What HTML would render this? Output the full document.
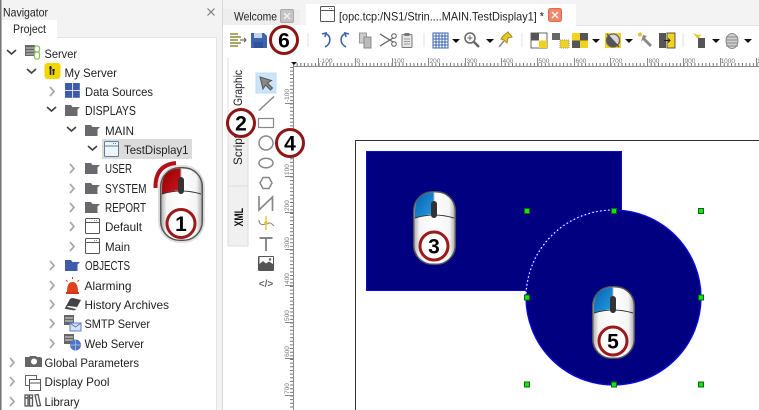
<!DOCTYPE html>
<html><head><meta charset="utf-8"><style>
html,body{margin:0;padding:0;background:#fff;width:759px;height:410px;overflow:hidden}
svg{display:block;position:absolute;left:0;top:0}
text{font-family:"Liberation Sans",sans-serif;font-size:12px;fill:#222}
.k{font-weight:bold;fill:#000;text-anchor:middle;font-size:21px}
.r{font-size:6.500px;fill:#777}
</style></head><body>
<svg width="759" height="410" viewBox="0 0 759 410" xmlns="http://www.w3.org/2000/svg">
<defs>
<linearGradient id="body" x1="0" x2="1" y1="0" y2="0"><stop offset="0" stop-color="#a8a8a8"/><stop offset=".14" stop-color="#f4f4f4"/><stop offset=".5" stop-color="#fff"/><stop offset=".86" stop-color="#f4f4f4"/><stop offset="1" stop-color="#a8a8a8"/></linearGradient>
<linearGradient id="blue" x1="0" x2="1" y1="0" y2="1"><stop offset="0" stop-color="#0a5fae"/><stop offset="1" stop-color="#22a0e4"/></linearGradient>
<linearGradient id="red" x1="0" x2="1" y1="0" y2="1"><stop offset="0" stop-color="#8e0000"/><stop offset="1" stop-color="#d4141c"/></linearGradient>
<path id="fld" d="M0 1h6l1.500 2H15l-2.500 2.500V12H0z"/>
<path id="chR" d="M0 0l4 4.500-4 4.500" fill="none" stroke="#a8a8a8" stroke-width="1.700"/>
<path id="chD" d="M0 0l4.500 4 4.500-4" fill="none" stroke="#444" stroke-width="1.700"/>
<g id="win"><rect x=".5" y=".5" width="14" height="15" rx="1" fill="#fff" stroke="#555"/><path d="M1 4.500h13" stroke="#555"/><path d="M9 2.500h4" stroke="#888" stroke-dasharray="1 1"/></g>
<path id="dn" d="M0 0h8l-4 4z" fill="#111"/>
</defs>

<rect width="759" height="410" fill="#f3f3f3"/>
<rect x="0" y="0" width="1.500" height="410" fill="#777"/>
<rect x="2" y="37" width="214" height="373" fill="#fff"/>
<rect x="2" y="20" width="55" height="18" fill="#fff"/>
<path d="M57 37.500H216M216.500 37V410" stroke="#e4e4e4" fill="none"/>
<rect x="222" y="25" width="537" height="385" fill="#fff"/>
<rect x="222" y="0" width="1" height="410" fill="#d8d8d8"/>

<text x="3" y="16.500" textLength="45" lengthAdjust="spacingAndGlyphs">Navigator</text>
<path d="M207.500 8.500l7 7m0-7l-7 7" stroke="#777" stroke-width="1.100"/>
<text x="13" y="33" textLength="33" lengthAdjust="spacingAndGlyphs">Project</text>

<use href="#chD" x="7" y="50"/><use href="#chD" x="27" y="69"/><use href="#chR" x="50" y="87"/>
<use href="#chD" x="47" y="107"/><use href="#chD" x="67" y="127"/><use href="#chD" x="88" y="146"/>
<use href="#chR" x="70" y="164"/><use href="#chR" x="70" y="184"/><use href="#chR" x="70" y="203"/><use href="#chR" x="70" y="222"/><use href="#chR" x="70" y="242"/>
<use href="#chR" x="50" y="261"/><use href="#chR" x="50" y="281"/><use href="#chR" x="50" y="300"/><use href="#chR" x="50" y="319"/><use href="#chR" x="50" y="339"/>
<use href="#chR" x="10" y="358"/><use href="#chR" x="10" y="377"/><use href="#chR" x="10" y="397"/>

<rect x="102" y="139" width="90" height="20" fill="#dcdcdc"/>

<text x="44.500" y="58" textLength="32.500" lengthAdjust="spacingAndGlyphs">Server</text>
<text x="64.500" y="77" textLength="52.500" lengthAdjust="spacingAndGlyphs">My Server</text>
<text x="85" y="96" textLength="68" lengthAdjust="spacingAndGlyphs">Data Sources</text>
<text x="85" y="115" textLength="51" lengthAdjust="spacingAndGlyphs" style="font-size:12.500px">DISPLAYS</text>
<text x="105" y="135" textLength="29" lengthAdjust="spacingAndGlyphs">MAIN</text>
<text x="124" y="154" textLength="64.500" lengthAdjust="spacingAndGlyphs">TestDisplay1</text>
<text x="105" y="173" textLength="27" lengthAdjust="spacingAndGlyphs" style="font-size:12.500px">USER</text>
<text x="105" y="193" textLength="41.500" lengthAdjust="spacingAndGlyphs" style="font-size:12.500px">SYSTEM</text>
<text x="105" y="212" textLength="41" lengthAdjust="spacingAndGlyphs" style="font-size:12.500px">REPORT</text>
<text x="105" y="231" textLength="37" lengthAdjust="spacingAndGlyphs">Default</text>
<text x="105" y="251" textLength="25" lengthAdjust="spacingAndGlyphs">Main</text>
<text x="85" y="270" textLength="45" lengthAdjust="spacingAndGlyphs" style="font-size:12.500px">OBJECTS</text>
<text x="84.500" y="290" textLength="47" lengthAdjust="spacingAndGlyphs">Alarming</text>
<text x="84.500" y="309" textLength="84.500" lengthAdjust="spacingAndGlyphs">History Archives</text>
<text x="84.500" y="328" textLength="65.500" lengthAdjust="spacingAndGlyphs">SMTP Server</text>
<text x="84.500" y="348" textLength="59.500" lengthAdjust="spacingAndGlyphs">Web Server</text>
<text x="44.500" y="367" textLength="94.500" lengthAdjust="spacingAndGlyphs">Global Parameters</text>
<text x="44.500" y="386" textLength="65" lengthAdjust="spacingAndGlyphs">Display Pool</text>
<text x="44.500" y="406" textLength="35" lengthAdjust="spacingAndGlyphs">Library</text>

<g>
<rect x="25" y="45" width="10" height="11" fill="#666"/><path d="M26 48h8M26 51h8M26 54h8" stroke="#ccc"/>
<rect x="34.500" y="46" width="5" height="6" rx="2" fill="none" stroke="#8cc265" stroke-width="1.300"/><rect x="34.500" y="52" width="5" height="7" rx="2" fill="none" stroke="#8cc265" stroke-width="1.300"/>
<rect x="44.500" y="63" width="16" height="16" rx="3" fill="#f2d600"/><path d="M50.500 66v9M53.500 69v6" stroke="#222" stroke-width="1.600"/><path d="M49 68h3M52 70h3" stroke="#222"/>
<g fill="#3d5ca8"><rect x="65" y="83" width="7" height="7"/><rect x="72.800" y="83" width="7" height="7"/><rect x="65" y="90.800" width="7" height="7"/><rect x="72.800" y="90.800" width="7" height="7"/></g>
<g fill="#6a686c"><use href="#fld" x="65" y="104"/><use href="#fld" x="85" y="124"/><use href="#fld" x="85" y="162"/><use href="#fld" x="85" y="182"/><use href="#fld" x="85" y="201"/></g>
<use href="#fld" x="65" y="259" fill="#3f5cab"/>
<g><rect x="104.500" y="141.500" width="14" height="15" rx="1" fill="#eef5fb" stroke="#5f7d9c"/><path d="M105 146h13" stroke="#5f7d9c"/><path d="M113 143.500h4" stroke="#5f7d9c" stroke-dasharray="1 1"/></g>
<use href="#win" x="85" y="218"/><use href="#win" x="85" y="238"/>
<path d="M67 292c0-5 1-10 5.500-10S78 287 78 292z" fill="#e2401c"/><rect x="66" y="292" width="13" height="2" fill="#c9381a"/><path d="M72.500 277v2M66 280l1.500 1.500M79 280l-1.500 1.500" stroke="#e2401c"/>
<path d="M65 308l5-9q1-1 3-1l8 2-5 9q-1 2-4 1l-6-1q-2-.5-1-1z" fill="#444"/><path d="M67 307l9 2 1-2-9-1z" fill="#fff"/>
<rect x="64" y="315" width="10" height="10" fill="#666"/><path d="M65 318h8M65 321h8" stroke="#ddd"/><rect x="70" y="323" width="11" height="8" fill="#d5e1f3" stroke="#5c7fc0"/><path d="M70 323l5.500 4 5.500-4" fill="none" stroke="#5c7fc0"/>
<rect x="64" y="334" width="10" height="10" fill="#666"/><path d="M65 337h8M65 340h8" stroke="#ddd"/><circle cx="75.500" cy="345" r="5.500" fill="#4f74c6"/><path d="M70 345h11M75.500 339.500v11" stroke="#b8c9ec" stroke-width=".7"/>
<path d="M25 357h4l1-1h6l1 1h3l2 1v9H25z" fill="#666"/><circle cx="34" cy="361.500" r="3" fill="#fff"/>
<rect x="25.500" y="375.500" width="11" height="10" fill="#fff" stroke="#666"/><rect x="29.500" y="379.500" width="11" height="11" fill="#fff" stroke="#555"/><path d="M30 383h10" stroke="#555"/>
<path d="M25 395h3v11h-3zM29.500 395h3v11h-3zM35 395l3-.5 2.500 11-3 .5z" fill="none" stroke="#555" stroke-width="1.300"/><path d="M25 398h3M29.500 398h3" stroke="#555" stroke-width="1.500"/>
</g>

<rect x="223" y="9" width="77" height="16" fill="#eeeeee"/>
<text x="234" y="20.500" textLength="43" lengthAdjust="spacingAndGlyphs">Welcome</text>
<rect x="280.500" y="9.500" width="13" height="13" rx="1.500" fill="#c4c4c4" stroke="#aaa"/><path d="M284 13l6 6m0-6l-6 6" stroke="#f4f4f4" stroke-width="1.300"/>
<rect x="306" y="4" width="270" height="22" fill="#fff"/>
<use href="#win" x="320" y="6" />
<text x="339" y="20.500" textLength="205" lengthAdjust="spacingAndGlyphs">[opc.tcp:/NS1/Strin....MAIN.TestDisplay1] *</text>
<rect x="548.500" y="8.500" width="13" height="13" rx="2" fill="#f0876b" stroke="#dc6a52"/><path d="M552 12l6 6m0-6l-6 6" stroke="#fff" stroke-width="1.300"/>
<rect x="576" y="25" width="183" height="1" fill="#e2e2e2"/>

<g>
<path d="M230 34h8M230 37h11M230 40h8M230 43h11M230 46h8" stroke="#8c8c3a" stroke-width="1.500"/><path d="M240 40h6m-2-2l2 2-2 2" fill="none" stroke="#555"/>
<path d="M251 33h13l3 3v12h-16z" fill="#3e63ad"/><rect x="254" y="33" width="8" height="5" fill="#c5d2ea"/><rect x="254" y="42" width="9" height="6" fill="#2f5299"/>
<path d="M308 33v14M424 33v14M522 33v14M683 33v14" stroke="#e2e2e2"/>
<path d="M322 34l4-1-1 4M325 33.500c6 1 7 10 0 13.500" fill="none" stroke="#3e63ad" stroke-width="1.600"/>
<path d="M349 34l-4-1 1 4M346 33.500c-6 1-7 10 0 13.500" fill="none" stroke="#3e63ad" stroke-width="1.600"/>
<rect x="359.500" y="33" width="7" height="10" fill="#ccc" stroke="#999"/><rect x="364" y="37" width="7" height="11" fill="#bbb" stroke="#888"/>
<path d="M380 34l13 8M380 46l13-8" stroke="#666" stroke-width="1.300" fill="none"/><circle cx="394" cy="36" r="2.300" fill="#fff" stroke="#555"/><circle cx="394" cy="44" r="2.300" fill="#fff" stroke="#555"/>
<rect x="402" y="34.500" width="10" height="13" rx="1" fill="#e6e6e6" stroke="#777"/><rect x="404.500" y="33" width="5" height="3" fill="#777"/><path d="M404 39h6M404 41.500h6M404 44h6" stroke="#999"/>
<rect x="433" y="33" width="15" height="15" fill="#fff" stroke="#3e63ad"/><path d="M436 33v15M439 33v15M442 33v15M445 33v15M433 36h15M433 39h15M433 42h15M433 45h15" stroke="#3e63ad"/>
<use href="#dn" x="452" y="39"/>
<circle cx="470" cy="38" r="5" fill="#fff" stroke="#666" stroke-width="1.500"/><path d="M467.500 38h5M470 35.500v5" stroke="#666"/><path d="M474 42l5 5" stroke="#666" stroke-width="2.500"/>
<use href="#dn" x="486" y="39"/>
<path d="M499 47l5-6" stroke="#888" stroke-width="1.500"/><path d="M503 36l5-4 4 5-4 1-1 5-3-3-3-1z" fill="#e6c52c" stroke="#a98d1a"/>
<rect x="531" y="33" width="16" height="15" fill="#fff" stroke="#666"/><rect x="531" y="33" width="8" height="7.500" fill="#555"/><rect x="539" y="40.500" width="8" height="7.500" fill="#f2d21e"/>
<rect x="552" y="33" width="8" height="7" fill="#666"/><rect x="560" y="40" width="9" height="8" fill="#f2d21e"/><path d="M560 40h9v8h-9z" fill="none" stroke="#999" stroke-dasharray="1 1"/>
<rect x="572" y="33" width="16" height="15" fill="#f2d21e"/><rect x="580" y="33" width="8" height="7.500" fill="#555"/><rect x="572" y="40.500" width="8" height="7.500" fill="#555"/>
<use href="#dn" x="592" y="39"/>
<rect x="605" y="33" width="16" height="15" fill="#f2d21e"/><circle cx="613" cy="40.500" r="6.500" fill="#d8d8d8" stroke="#666" stroke-width="1.300"/><path d="M607 34l12 13" stroke="#555" stroke-width="1.300"/><path d="M608.500 36l8.800 9.500a6.500 6.500 0 0 1-8.800-9.500z" fill="#555"/>
<use href="#dn" x="625" y="39"/>
<circle cx="640" cy="34.500" r="2" fill="#e6c52c"/><path d="M643 35l4 1-2 2 7 7-2 2-7-7-2 2z" fill="#888"/>
<rect x="659" y="33" width="7" height="15" fill="#555"/><rect x="667" y="33" width="8" height="15" fill="#f2d21e" stroke="#555"/><path d="M664 40.500h6m-2-2l2 2-2 2" fill="none" stroke="#222"/>
<path d="M693 33l5 2 4-1-3 3 1 1h-3z" fill="#e6c52c"/><rect x="698" y="38" width="7" height="10" fill="#555"/>
<use href="#dn" x="712" y="39"/>
<ellipse cx="732" cy="41" rx="6" ry="7.500" fill="#d0d0d0" stroke="#888"/><path d="M726 37h12M726 40h12M726 43h12M726 46h12" stroke="#888"/>
<use href="#dn" x="744" y="39"/>
</g>

<path d="M228 58h20v188h-20z" fill="#f0f0f0"/>
<rect x="228" y="58" width="20" height="66" fill="#fff"/>
<path d="M228 58v188M228 186h20M228 246h20M248 124v122" stroke="#dedede" fill="none"/>
<text transform="translate(242,106) rotate(-90)" textLength="36" lengthAdjust="spacingAndGlyphs">Graphic</text>
<text transform="translate(242,165) rotate(-90)" textLength="30" lengthAdjust="spacingAndGlyphs">Script</text>
<text transform="translate(243,226.500) rotate(-90)" textLength="18.500" lengthAdjust="spacingAndGlyphs" style="font-weight:bold;fill:#111">XML</text>

<rect x="256" y="73" width="20" height="20" fill="#cce4f7" stroke="#bcdcf5"/>
<path d="M260 77l3 12 2.500-4 5 5 2-2-5-5 4-2.500z" fill="#888" stroke="#555"/>
<path d="M259 110.500l15-14" stroke="#888" stroke-width="1.500"/>
<rect x="258.500" y="118.500" width="15" height="9" fill="#fff" stroke="#888" stroke-width="1.200"/>
<circle cx="266" cy="143" r="7" fill="#fff" stroke="#888" stroke-width="1.500"/>
<ellipse cx="266" cy="163" rx="7" ry="4.800" fill="#fff" stroke="#888" stroke-width="1.500"/>
<path d="M260 183l3-5.500h6l3 5.500-3 5.500h-6z" fill="#fff" stroke="#888" stroke-width="1.500"/>
<path d="M259 196v14L272.500 197v14" fill="none" stroke="#888" stroke-width="1.700"/>
<path d="M259 220q0 5 4.500 4.500t5.500-1.500 5 3" fill="none" stroke="#888" stroke-width="1.100"/><path d="M266 216v14" stroke="#e0c030" stroke-width="1.300"/><circle cx="266" cy="223" r="1.800" fill="#e0c030"/>
<path d="M259.500 238h13M266 238v13" stroke="#777" stroke-width="1.700"/>
<rect x="258" y="256" width="16" height="15" rx="1" fill="#555"/><path d="M259.500 264l3.500-3 3 2.500 3-2 4 2.500v-7h-13.500z" fill="#fff"/><circle cx="270" cy="259.500" r="1.200" fill="#555"/>
<text x="266" y="287" text-anchor="middle" style="font-size:10px;font-weight:bold;fill:#666">&lt;/&gt;</text>

<path d="M293.500 66V410M293 66.500H759" stroke="#8a8a8a" fill="none"/>
<path d="M291.500 67V410" stroke="#777" stroke-dasharray="1 2.650" stroke-width="3"/>
<path d="M293 64.500H759" stroke="#777" stroke-width="3" stroke-dasharray="1 2.650"/>
<path d="M291 62h6l-3 3z" fill="#111"/>
<path d="M318.500 58v8M355.500 58v8M392.500 58v8M428.500 58v8M465.500 58v8M501.500 58v8M537.500 58v8M574.500 58v8M610.500 58v8M647.500 58v8M683.500 58v8M720.500 58v8M756.500 58v8" stroke="#888"/>
<g>
<text class="r" x="319.500" y="63">-100</text><text class="r" x="356.500" y="63">0</text><text class="r" x="393.500" y="63">100</text><text class="r" x="429.500" y="63">200</text><text class="r" x="466.500" y="63">300</text><text class="r" x="502.500" y="63">400</text><text class="r" x="538.500" y="63">500</text><text class="r" x="575.500" y="63">600</text><text class="r" x="611.500" y="63">700</text><text class="r" x="648.500" y="63">800</text><text class="r" x="684.500" y="63">900</text><text class="r" x="720.500" y="63">1000</text><text class="r" x="757" y="63">11</text>
</g>
<path d="M285 103.500h8M285 140.500h8M285 176.500h8M285 212.500h8M285 249.500h8M285 285.500h8M285 322.500h8M285 358.500h8M285 395.500h8" stroke="#888"/>
<text class="r" transform="translate(289,102) rotate(-90)">-100</text>
<text class="r" transform="translate(289,139) rotate(-90)">0</text>
<text class="r" transform="translate(289,175) rotate(-90)">100</text>
<text class="r" transform="translate(289,211) rotate(-90)">200</text>
<text class="r" transform="translate(289,248) rotate(-90)">300</text>
<text class="r" transform="translate(289,284) rotate(-90)">400</text>
<text class="r" transform="translate(289,321) rotate(-90)">500</text>
<text class="r" transform="translate(289,357) rotate(-90)">600</text>
<text class="r" transform="translate(289,394) rotate(-90)">700</text>

<path d="M355.500 410V140.500H759" fill="none" stroke="#333"/>
<rect x="366.500" y="151.500" width="255" height="139" fill="#000080" stroke="#0a0ad8"/>
<circle cx="613.500" cy="297.500" r="87.500" fill="#000080" stroke="#0a0ae0" stroke-width="1.300"/>
<path d="M526 297.500A87.500 87.500 0 0 1 613.500 210" fill="none" stroke="#fff" stroke-width="1.200" stroke-dasharray="1.500 2.500"/>
<g fill="#00ee00" stroke="#1c5c1c">
<rect x="524.500" y="208.500" width="5" height="5"/><rect x="611.500" y="208.500" width="5" height="5"/><rect x="698.500" y="208.500" width="5" height="5"/>
<rect x="524.500" y="295" width="5" height="5"/><rect x="698.500" y="295" width="5" height="5"/>
<rect x="524.500" y="382" width="5" height="5"/><rect x="611.500" y="382" width="5" height="5"/><rect x="698.500" y="382" width="5" height="5"/>
</g>

<g transform="translate(160,167)">
<rect x="-2" y="-2" width="47" height="78" rx="22" fill="#000" opacity=".13"/>
<rect x=".7" y=".7" width="41.600" height="72.600" rx="19" fill="url(#body)" stroke="#555" stroke-width="1.500"/>
<path d="M2 27V20Q2 2 20.500 1.500V23Q10 24 2 27z" fill="url(#red)"/>
<path d="M2 27Q21 21 41 27" fill="none" stroke="#333"/><path d="M21 1v26" stroke="#bbb"/>
<rect x="18" y="10" width="6" height="17" rx="3" fill="#333"/>
<circle cx="21" cy="56.500" r="14" fill="#fff" stroke="#9c1a1a" stroke-width="3"/>
<text class="k" x="21" y="64">1</text>
</g>
<path d="M155.500 188Q155 165 176 163" fill="none" stroke="#b0101a" stroke-width="4"/>
<g transform="translate(413,191)">
<rect x=".7" y=".7" width="41.600" height="72.600" rx="19" fill="url(#body)" stroke="#555" stroke-width="1.500"/>
<path d="M2 27V20Q2 2 20.500 1.500V23Q10 24 2 27z" fill="url(#blue)"/>
<path d="M2 27Q21 21 41 27" fill="none" stroke="#333"/><path d="M21 1v26" stroke="#bbb"/>
<rect x="18" y="10" width="6" height="17" rx="3" fill="#333"/>
<circle cx="21" cy="55" r="14" fill="#fff" stroke="#9c1a1a" stroke-width="3"/>
<text class="k" x="21" y="62.500">3</text>
</g>
<g transform="translate(592,286)">
<rect x=".7" y=".7" width="41.600" height="71.600" rx="19" fill="url(#body)" stroke="#555" stroke-width="1.500"/>
<path d="M2 27V20Q2 2 20.500 1.500V23Q10 24 2 27z" fill="url(#blue)"/>
<path d="M2 27Q21 21 41 27" fill="none" stroke="#333"/><path d="M21 1v26" stroke="#bbb"/>
<rect x="18" y="10" width="6" height="17" rx="3" fill="#333"/>
<circle cx="21" cy="55" r="14" fill="#fff" stroke="#9c1a1a" stroke-width="3"/>
<text class="k" x="21" y="62.500">5</text>
</g>

<circle cx="284" cy="40" r="13.500" fill="#fff" stroke="#8f1616" stroke-width="3"/>
<text class="k" x="284" y="47.500">6</text>
<circle cx="241" cy="123" r="13.500" fill="#fff" stroke="#8f1616" stroke-width="3"/>
<text class="k" x="241" y="130.500">2</text>
<circle cx="290" cy="143" r="13.500" fill="#fff" stroke="#8f1616" stroke-width="3"/>
<text class="k" x="290" y="150.500">4</text>
</svg>
</body></html>
